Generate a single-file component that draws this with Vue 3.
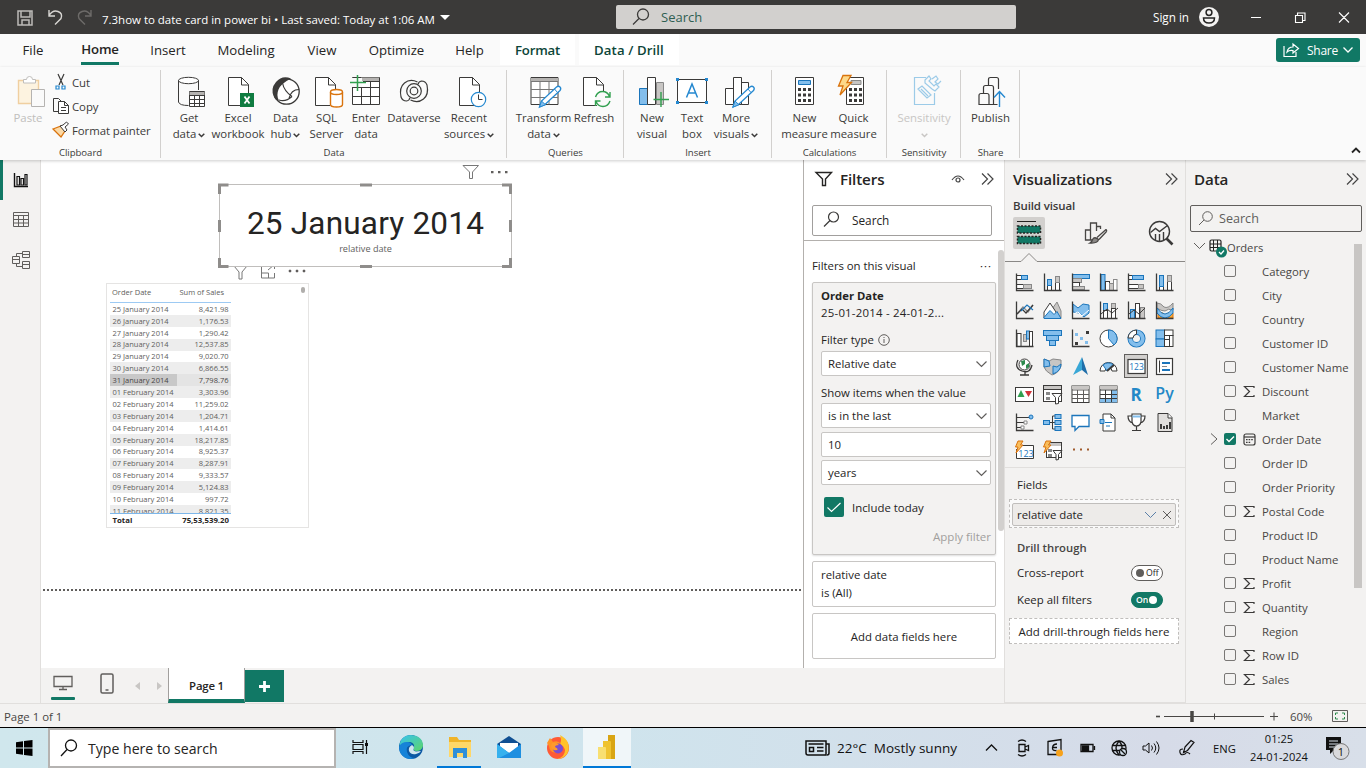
<script setup>
const K = '#3b3a39'
const B = '#1b75bb'
const L = '#83beec'
const doc = (x) => `<path d="M${x} 2.5h13l7 7V30.5H${x}z" fill="#fff" stroke="#3b3a39"/><path d="M${x + 13} 2.5v7.5h7" fill="none" stroke="#3b3a39"/>`
const pencil = (x) => `<path d="M${x} 32l2-6 15-14q2-1.500 3.500 0t0 3.500l-15 14z" fill="#fff" stroke="#2488d0" stroke-width="1.300"/><path d="M${x} 32l2-6 4 3.800z" fill="#83beec" stroke="#2488d0"/><path d="M${x + 15} 14l3 3.500" stroke="#2488d0"/>`
const bolt = '<path d="M6 0.500h8l-4 7h4.500L3 20l3-9H1.500z" fill="#fcd98a" stroke="#d9730d" stroke-width="1.300"/>'
const dots = (x) => [14, 19.5, 25].map(y => [0, 5, 10].map(d => `<rect x="${x + d}" y="${y - 1}" width="3" height="3" fill="#3b3a39"/>`).join('')).join('')

const ribbon = {
  get: `<path d="M6.500 5v22q1 3.500 10 3.500M26.500 5v10" stroke="${K}" fill="none"/><ellipse cx="16.500" cy="5.500" rx="10" ry="3.200" fill="#fff" stroke="${K}"/><path d="M17.500 16.500h15v15h-15z" fill="#fff" stroke="${K}"/><path d="M17.500 17h15v3h-15z" fill="#b5b3b1"/><path d="M17.500 20.500h15M17.500 24.500h15M17.500 28.500h15M22.500 20v11.500M27.500 20v11.500" stroke="${K}" fill="none"/>`,
  excel: doc(7.5) + '<rect x="19" y="18" width="14" height="14" fill="#107c41"/><path d="M23.500 21.500l5 7M28.500 21.500l-5 7" stroke="#fff" stroke-width="1.800"/>',
  hub: `<circle cx="17.500" cy="16.500" r="12.700" fill="#fff" stroke="${K}" stroke-width="1.300"/><path d="M22 3.500Q13 0 7 7T5 22q1.500 3.500 5 3.500-3-5-.5-11T22 3.500z" fill="${K}"/><path d="M13.500 8q1.500 8 9.500 13.500M20 23.500q2-9 10-9M10 25q7 2 13-3.500" fill="none" stroke="${K}" stroke-width="1.200"/>`,
  sql: doc(5.5) + '<path d="M20 15h12.500v17H20z" fill="#fafafa"/><path d="M20.500 17v12.500q0 2.500 6 2.500t6-2.500V17" fill="#fff" stroke="#d9730d" stroke-width="1.400"/><ellipse cx="26.500" cy="17" rx="6" ry="2.500" fill="#fff" stroke="#d9730d" stroke-width="1.400"/>',
  enter: `<path d="M3.500 2.500h27v27h-27z" fill="#fff" stroke="${K}"/><path d="M12 2.500h18v3.500H12z" fill="#b5b3b1"/><path d="M3.500 12.500h27M3.500 21.500h27M12.500 6v23.500M21.500 6v23.500M14 6.500h16.500" stroke="${K}" fill="none"/><path d="M0 3h13v9H0z" fill="#fafafa"/><path d="M1 7.500h16M8.500 0v16" stroke="#31a04f" stroke-width="1.500"/>`,
  dataverse: `<g fill="none" stroke="${K}" stroke-width="1.200"><circle cx="17" cy="16" r="3.800"/><circle cx="17" cy="16" r="7.300"/><path d="M20.500 7Q13 3.500 7.500 8T4 22q1.500 4 5.500 4 3-.5 3.500-3.500"/><path d="M13.500 25Q21 28.500 26.500 24T30 10q-1.500-4-5.500-4-3 .5-3.500 3.500"/></g>`,
  recent: doc(7.5) + '<circle cx="26.500" cy="24.500" r="7.200" fill="#fff" stroke="#2488d0" stroke-width="1.200"/><path d="M26.500 19.500v5h4" fill="none" stroke="#3b3a39"/>',
  transform: `<path d="M4 2.500h27v27H4z" fill="#fff" stroke="${K}"/><path d="M4 3h27v3H4z" fill="#b5b3b1"/><path d="M4 6.500h27M4 14.500h27M4 22.500h27M13 6v23.500M22 6v23.500" stroke="#777"/>` + pencil(12.5),
  refresh: doc(6.5) + '<circle cx="26" cy="24.500" r="8.500" fill="#fafafa"/><path d="M18.500 22q2-5.500 7-5.500t7 5M33 17v5h-5M33 26q-2 5.500-7 5.500t-7-5M18.500 31v-5h5" fill="none" stroke="#31a04f" stroke-width="1.400"/>',
  visual: `<path d="M4.500 13.500h8v16h-8z" fill="${L}" stroke="${B}"/><path d="M21.500 7.500h7v22h-7z" fill="#c8c6c4" stroke="#888"/><path d="M12.500 2.500h8v27h-8z" fill="#fff" stroke="${K}"/><path d="M18.500 24.500h15.500M26 17v15" stroke="#31a04f" stroke-width="1.400"/>`,
  text: `<path d="M2.500 4.500h29v23h-29z" fill="#fff" stroke="${K}"/><path d="M1 3h3v3H1zM30 3h3v3h-3zM1 26h3v3H1zM30 26h3v3h-3z" fill="#2488d0"/><path d="M11.500 22.500l5.500-13.500 5.500 13.500M13.500 18h7" fill="none" stroke="#2488d0" stroke-width="1.500"/>`,
  more: `<path d="M6.500 13.500h8v16h-8zM22.500 7.500h7v22h-7zM14.500 2.500h8v27h-8z" fill="#fff" stroke="${K}"/>` + pencil(14),
  measure: `<path d="M7.500 2.500h18v27h-18z" fill="#fff" stroke="${K}"/><path d="M10.500 5.500h12v4h-12z" fill="${L}" stroke="${B}"/>` + dots(10),
  quick: `<path d="M9.500 2.500h17v27h-17z" fill="#fff" stroke="${K}"/><path d="M14 5.500h10v4H14z" fill="#c8c6c4" stroke="#888"/>` + dots(12) + bolt,
  sensitivity: `<g fill="none" stroke="#9ccbe8" stroke-width="1.200"><path d="M19 2.500H7.500v27h20V18"/><path d="M11 14l4-3 9 9-4 3zM14 14l7 7M18 5l4-4 2 3-2 2 5 5 2-2 3 3-4 4-3-2-7-6zM25 4l4-3 2 3-3 3 3 2 3-3"/></g>`,
  publish: `<path d="M5 29.500V20.500q0-2 2-2h6q2 0 2 2v9zM9.500 18V12.500q0-2 2-2h6q2 0 2 2V29.500H15M14.500 10V4.500q0-2 2-2h6q2 0 2 2V14M19.500 29.500h4" fill="none" stroke="${K}" stroke-width="1.200"/><path d="M25.500 32V17M20 22.500l5.500-6 5.500 6" fill="none" stroke="#2488d0" stroke-width="1.400"/>`
}

const groups = [
  { label: 'Data', cls: 'g-data', tools: [
    { i: 'get', w: 'w48', a: 'Get', b: 'data', d: 1 }, { i: 'excel', w: 'w50', a: 'Excel', b: 'workbook' },
    { i: 'hub', w: 'w45', a: 'Data', b: 'hub', d: 1 }, { i: 'sql', w: 'w37', a: 'SQL', b: 'Server' },
    { i: 'enter', w: 'w42', a: 'Enter', b: 'data' }, { i: 'dataverse', w: 'w54', a: 'Dataverse', b: '' },
    { i: 'recent', w: 'w56', a: 'Recent', b: 'sources', d: 1 }] },
  { label: 'Queries', cls: 'g-queries', tools: [
    { i: 'transform', w: 'w57', a: 'Transform', b: 'data', d: 1 }, { i: 'refresh', w: 'w44', a: 'Refresh', b: '' }] },
  { label: 'Insert', cls: 'g-insert', tools: [
    { i: 'visual', w: 'w40', a: 'New', b: 'visual' }, { i: 'text', w: 'w40', a: 'Text', b: 'box' },
    { i: 'more', w: 'w48', a: 'More', b: 'visuals', d: 1 }] },
  { label: 'Calculations', cls: 'g-calc', tools: [
    { i: 'measure', w: 'w48', a: 'New', b: 'measure' }, { i: 'quick', w: 'w50', a: 'Quick', b: 'measure' }] },
  { label: 'Sensitivity', cls: 'g-sens', tools: [{ i: 'sensitivity', w: 'w57', a: 'Sensitivity', b: '', d: 1, off: 1 }] },
  { label: 'Share', cls: 'g-share', tools: [{ i: 'publish', w: 'w44', a: 'Publish', b: '' }] }
]

const tabs = [
  ['File', 't-file'], ['Home', 't-home'], ['Insert', 't-insert'], ['Modeling', 't-model'], ['View', 't-view'],
  ['Optimize', 't-opt'], ['Help', 't-help'], ['Format', 't-format'], ['Data / Drill', 't-drill']
]

const axis = `<path d="M1.500 0.500v17h17" fill="none" stroke="${K}" stroke-width="1.300"/>`
const r = (x, y, w, h, f = '#fff', s = K) => `<rect x="${x}" y="${y}" width="${w}" height="${h}" fill="${f}" stroke="${s}"/>`
const G = '#c8c6c4'
const vis = [
  r(1.5, 2.5, 5, 4) + r(6.5, 2.5, 6, 4, L, B) + r(1.5, 11.5, 7, 4) + r(8.5, 11.5, 8, 4, G, '#888') + axis,
  r(4.5, 11.5, 4, 6) + r(4.5, 6.5, 4, 6, L, B) + r(12.5, 9.5, 4, 8) + r(12.5, 3.5, 4, 6, G, '#888') + axis,
  r(1.5, 1.5, 17, 4, L, B) + r(1.5, 5.5, 9, 4, G, '#888') + r(1.5, 9.5, 7, 4) + r(1.5, 13.5, 12, 3, G, '#888') + axis,
  r(2, 1.5, 4, 16, L, B) + r(6.5, 8.5, 4, 9) + r(10.5, 10.5, 4, 7, G, '#888') + r(14.5, 6.5, 3.5, 11, '#fff', '#888') + axis,
  r(1.5, 2.5, 4, 4) + r(5.5, 2.5, 11, 4, L, B) + r(1.5, 11.5, 10, 4) + r(11.5, 11.5, 5, 4, G, '#888') + axis,
  r(4.5, 13.5, 4, 4) + r(4.5, 2.5, 4, 11, L, B) + r(12.5, 8.5, 4, 9) + r(12.5, 2.5, 4, 6, G, '#888') + axis,
  `<path d="M2 13l6-7 5 5 5-7" fill="none" stroke="#888" stroke-width="1.300"/><path d="M2 13l5-5 4 4 7-8" fill="none" stroke="${K}" stroke-width="1.200"/><path d="M6 10l6-6 6 5" fill="none" stroke="${B}" stroke-width="1.200"/>` + axis,
  `<path d="M9 8l5-7 4 9v7H9z" fill="${G}" stroke="#888"/><path d="M1 11l6-9 6 9v6H1z" fill="#fff" stroke="${K}"/><path d="M1 17.500v-1l6-7 4 4 3-3 4 7z" fill="${L}" stroke="${B}"/>`,
  `<path d="M2 3l5 4 5-4 6 1v8l-5 4-5-4-6-1z" fill="${L}" stroke="${B}"/><path d="M2 13l5-2 4 4 7-6" fill="none" stroke="#fff"/>` + axis,
  r(4.5, 2.5, 4, 7, L, B) + r(4.5, 9.5, 4, 8) + r(12.5, 2.5, 4, 5, G, '#888') + r(12.5, 7.5, 4, 10) + `<path d="M2 13l6-5 5 4 6-5" fill="none" stroke="${K}"/>` + axis,
  r(3.5, 8.5, 4, 9, L, B) + r(8.5, 2.5, 4, 15) + r(13.5, 6.5, 4, 11, G, '#888') + `<path d="M2 13l5-4 5 4 6-6" fill="none" stroke="${K}"/>` + axis,
  `<path d="M2 2q4 0 7 4 4 2 9-4v7q-5-2-8 1-4 0-8-3z" fill="${G}" stroke="#888"/><path d="M3 12h5v5H3zM13 12h5v5h-5z" fill="#f5a83b" stroke="#d9730d"/><path d="M2 7q4 6 8 6t8-6v5q-4 5-8 5t-8-5z" fill="${L}" stroke="${B}"/>` + axis,
  r(2, 4.5, 4, 13) + r(8.5, 5.5, 3, 7, G, '#888') + r(11.5, 2, 3, 8, L, B) + r(14.5, 2.5, 3, 15) + axis,
  r(.5, 1.5, 18, 5, L, B) + r(3.5, 6.5, 12, 5, L, B) + r(6.5, 11.5, 6, 5, L, B),
  `<path d="M4 4h3v3H4zM9 8h3v3H9zM14 12h3v3h-3z" fill="${L}"/><path d="M15 2h3v3h-3zM4 13h3v3H4z" fill="${K}"/>` + axis,
  `<circle cx="9.500" cy="9.500" r="8.500" fill="#fff" stroke="${K}"/><path d="M9.500 1a8.500 8.500 0 0 1 5.500 15l-5.500-6.500z" fill="${L}" stroke="${B}"/>`,
  `<circle cx="9.500" cy="9.500" r="6.300" fill="none" stroke="${B}" stroke-width="5.500"/><circle cx="9.500" cy="9.500" r="6.300" fill="none" stroke="${L}" stroke-width="3.800"/><path d="M9.500 1a8.500 8.500 0 0 0-8.500 8h5q0-3 3.500-4z" fill="#fff" stroke="${K}"/>`,
  r(1, 1, 8.5, 9, L, B) + r(1, 10, 8.5, 7.5, L, B) + r(9.5, 1, 8.5, 5.5) + r(9.5, 6.5, 5, 4) + r(14.5, 6.5, 3.5, 11) + r(9.5, 10.5, 5, 7),
  `<circle cx="9.500" cy="7.500" r="5.500" fill="#fff" stroke="${K}"/><path d="M6 4l4-1v4L7 9zM11 8l3-2v4l-3 2z" fill="#2e8b4e"/><path d="M3 3q-4 8 4 11t10-6M10 14v4M5 18h9" fill="none" stroke="${K}" stroke-width="1.300"/>`,
  `<path d="M1 2l5 2 4-2 8 1v6q-2 7-9 9-7-4-8-8z" fill="${G}" stroke="#888"/><path d="M1 2l5 2 1 5-6 1zM10 9l4 1 4-3q0 7-8 10z" fill="${L}" stroke="${B}"/>`,
  `<path d="M11 0l6 18-6-5z" fill="#1f6ea9"/><path d="M11 0L2 18l9-5z" fill="#38a7d6"/>`,
  `<path d="M1 14a8.500 8.500 0 0 1 17 0h-5a3.500 3.500 0 0 0-7 0z" fill="#fff" stroke="${K}"/><path d="M4 8a8.500 8.500 0 0 1 10-.5L8 14z" fill="${L}" stroke="${B}"/><path d="M8 14l7-6" stroke="${K}" stroke-width="2"/>`,
  `<rect x="1" y="2.500" width="17" height="14" fill="#fff" stroke="${K}" stroke-width="1.200"/><text x="9.500" y="12.800" font-size="8.500" text-anchor="middle" fill="${B}">123</text>`,
  `<rect x="1.500" y="1.500" width="16" height="16" fill="#fff" stroke="${K}" stroke-width="1.200"/><path d="M4.500 3.500v12" stroke="${K}"/><path d="M7 6h8M7 13h8" stroke="${B}" stroke-width="2"/><path d="M7 9.500h5" stroke="#888"/>`,
  r(.5, 2.5, 18, 14) + `<path d="M2.500 12l3.500-7 3.500 7z" fill="#31a04f"/><path d="M10 6h7l-3.500 6z" fill="#d13438"/>`,
  r(.5, .5, 18, 16) + `<path d="M1 1h17v3H1z" fill="${G}"/><path d="M3 7h4v3H3zM3 12h4v3H3z" fill="#888"/><path d="M.5 4.500h18" stroke="${K}"/><path d="M9 8.500h10l-3.500 4v6l-3 .5v-6.500z" fill="#fff" stroke="${K}"/>`,
  r(1, 1, 17, 16.5) + `<path d="M1 1h17v3H1z" fill="${G}"/><path d="M1 5h17M1 9.500h17M1 13.500h17M6.500 5v12M12.500 5v12" stroke="#605e5c"/>`,
  r(1, 1, 17, 16.5) + `<path d="M1 1h17v3H1z" fill="${G}"/><path d="M12.500 5H18v12.500H1v-4h11.500z" fill="${L}"/><path d="M1 5h17M1 9.500h17M1 13.500h17M6.500 5v12M12.500 5v12" stroke="${K}"/>`,
  '<text x="9" y="15.500" font-size="17" font-weight="700" text-anchor="middle" fill="#2488c7">R</text>',
  '<text x="9.500" y="14" font-size="16" font-weight="600" text-anchor="middle" fill="#2488c7">Py</text>',
  `<path d="M2 4.500h13M2 9.500h8M2 14.500h5" stroke="${K}"/><circle cx="16" cy="4" r="2" fill="${L}" stroke="${B}"/><path d="M9 8h3v3H9zM6 13h3v3H6z" fill="#fff" stroke="#888"/>` + axis,
  `<path d="M6 9.500h6M9.500 3v13M9.500 3H12M9.500 16H12" fill="none" stroke="${K}"/>` + r(.5, 7.5, 6, 4, L, B) + r(12, 1.5, 6, 4, L, B) + r(12, 7.5, 6, 4, L, B) + r(12, 13.5, 6, 4, L, B),
  `<path d="M1 2.500h17v11H8l-4 4v-4H1z" fill="#fff" stroke="${B}" stroke-width="1.300"/>`,
  `<path d="M4 6V1h8l4 4v13H4v-7" fill="#fff" stroke="${K}"/><path d="M12 1v4h4" fill="none" stroke="${K}"/><path d="M6 9.500h7M7 13h4" stroke="${B}"/><path d="M1 6.500h4v4H1z" fill="${L}" stroke="${B}"/>`,
  `<path d="M5 1h9v8q-1 4-4.500 4T5 9zM5 3H1q0 6 5 7M14 3h4q0 6-5 7M9.500 13v4M5 17.500h9" fill="#fff" stroke="${K}" stroke-width="1.200"/><path d="M5.500 2.500h8v2h-8z" fill="${L}"/>`,
  `<path d="M3 .5h10l4 4v14H3z" fill="#e1dfdd" stroke="${K}"/><path d="M13 .5V5h4" fill="#fff" stroke="${K}"/><path d="M6 11v5M9 13v3M12 12v4M15 9v7" stroke="${K}" stroke-width="2"/>`,
  `<path d="M4 4.500h14.500v13H1.500V8" fill="#fff" stroke="${K}"/><text x="11" y="15.500" font-size="9" text-anchor="middle" fill="${B}">123</text><path d="M3 0h5L5.500 4H8L1 12l2-6H.5z" fill="#f9bd5b" stroke="#d9730d"/>`,
  r(3.5, 1.5, 15, 15) + `<path d="M4 2h14v3H4z" fill="${G}"/><path d="M5 8h4v3H5zM5 13h4v3H5z" fill="#888"/><path d="M10 9.500h9l-3.500 4v5l-2.500.5v-5.500z" fill="#fff" stroke="${K}"/><path d="M3 0h5L5.500 4H8L1 12l2-6H.5z" fill="#f9bd5b" stroke="#d9730d"/>`,
  '<path d="M2 7.500h2v2H2zM9 7.500h2v2H9zM16 7.500h2v2h-2z" fill="#a05a2c"/>'
]

const rows = [
  ['25 January 2014', '8,421.98'], ['26 January 2014', '1,176.53'], ['27 January 2014', '1,290.42'],
  ['28 January 2014', '12,537.85'], ['29 January 2014', '9,020.70'], ['30 January 2014', '6,866.55'],
  ['31 January 2014', '7,798.76'], ['01 February 2014', '3,303.96'], ['02 February 2014', '11,259.02'],
  ['03 February 2014', '1,204.71'], ['04 February 2014', '1,414.61'], ['05 February 2014', '18,217.85'],
  ['06 February 2014', '8,925.37'], ['07 February 2014', '8,287.91'], ['08 February 2014', '9,333.57'],
  ['09 February 2014', '5,124.83'], ['10 February 2014', '997.72'], ['11 February 2014', '8,821.35']
]

const fields = [
  ['Category'], ['City'], ['Country'], ['Customer ID'], ['Customer Name'], ['Discount', 's'], ['Market'],
  ['Order Date', 'd'], ['Order ID'], ['Order Priority'], ['Postal Code', 's'], ['Product ID'], ['Product Name'],
  ['Profit', 's'], ['Quantity', 's'], ['Region'], ['Row ID', 's'], ['Sales', 's']
]
</script>

<template>
  <div class="app">
    <header class="titlebar">
      <svg class="qa" width="100" height="34" fill="none">
        <path d="M18 11h14v14H18zM21 11v6h9v-6M22 25v-5h7v5" stroke="#bdbbb8" stroke-width="1.500" />
        <path d="M49 10v6h6M49 15.500q4-6 9-4t3 7l-6 6" stroke="#d8d6d3" stroke-width="1.400" />
        <path d="M91 10v6h-6M91 15.500q-4-6-9-4t-3 7l6 6" stroke="#6d6b69" stroke-width="1.400" />
      </svg>
      <span class="doc-title">7.3how to date card in power bi • Last saved: Today at 1:06 AM</span>
      <i class="caret"></i>
      <div class="top-search">
        <svg width="18" height="18" fill="none" stroke="#3b3a39" stroke-width="1.300"><circle cx="11" cy="6.500" r="5.500" /><path d="M7 10.500L1 16.500" /></svg>
        <span>Search</span>
      </div>
      <span class="signin">Sign in</span>
      <svg class="avatar" width="20" height="20"><circle cx="10" cy="10" r="10" fill="#f3f2f1" /><g fill="none" stroke="#252423" stroke-width="1.500"><circle cx="10" cy="5.500" r="2.900" /><path d="M4.500 11h11q0 5-5.500 5t-5.500-5z" /></g></svg>
      <svg class="winbtns" width="110" height="34" fill="none" stroke="#fff">
        <path d="M12 17.500h10M56.500 15.500h7v7h-7zM58.500 15v-2h7.500v7.500h-2M100 12.500l10 10M110 12.500l-10 10" stroke-width="1.100" />
      </svg>
    </header>

    <nav class="tabs">
      <span v-for="t in tabs" :key="t[0]" class="tab" :class="t[1]"><b>{{ t[0] }}</b></span>
      <div class="share-btn">
        <svg width="17" height="14" fill="none" stroke="#fff" stroke-width="1.200"><path d="M1 3v10.500h12V9M4 9q1-5 6-5V1l5.500 4.500L10 10V7.500Q6 7 4 9z" /></svg>
        <span>Share</span>
        <svg width="10" height="6" fill="none" stroke="#fff" stroke-width="1.300"><path d="M.5.500L5 5 9.500.500" /></svg>
      </div>
    </nav>

    <section class="ribbon">
      <div class="group clipboard">
        <div class="tools">
          <div class="paste">
            <svg width="30" height="32" fill="none"><path d="M2.500 5.500h20v23h-20z" fill="#fdf3e0" stroke="#f0cfa0" stroke-width="1.400" /><path d="M7.500 8V4.500h3q0-3 3-3t3 3h3V8z" fill="#fff" stroke="#c0bebc" /><path d="M15.500 14.500h13v17h-13z" fill="#fafafa" stroke="#b5b3b1" /></svg>
            <span>Paste</span>
          </div>
          <div class="clip-list">
            <div><svg width="18" height="18" fill="none" stroke="#3b3a39" stroke-width="1.200"><path d="M6 1l5 11M12 1L7 12" /><path d="M4 13h3v3H4zM10 13h3v3h-3z" stroke="#2488d0" /></svg>Cut</div>
            <div><svg width="18" height="18" fill="none" stroke="#3b3a39"><path d="M6 14.500H1.500v-13h5L9 4" /><path d="M6.500 4.500h6l4 4v8h-10zM12.500 4.500v4h4M9 10.500h5M9 13.500h5" fill="#fff" /></svg>Copy</div>
            <div><svg width="18" height="18" fill="none"><path d="M1 8l8-3 4 5-4 6z" fill="#fbd9a6" stroke="#d9730d" stroke-width="1.300" /><path d="M8 5l5 6 2-2-2-3 3.500-3-2-2-3.500 3z" fill="#fff" stroke="#3b3a39" /></svg>Format painter</div>
          </div>
        </div>
        <span class="glabel">Clipboard</span>
      </div>
      <div v-for="g in groups" :key="g.label" class="group" :class="g.cls">
        <div class="tools">
          <div v-for="t in g.tools" :key="t.i" class="tool" :class="[t.w, { off: t.off }]">
            <svg width="34" height="34" fill="none" v-html="ribbon[t.i]"></svg>
            <span>{{ t.a }}</span>
            <span>{{ t.b }}<svg v-if="t.d" class="chev" width="7" height="5" fill="none" stroke="currentColor" stroke-width="1.500"><path d="M.7.700L3.500 3.500 6.300.700" /></svg></span>
          </div>
        </div>
        <span class="glabel">{{ g.label }}</span>
      </div>
      <svg class="collapse" width="10" height="7" fill="none" stroke="#252423" stroke-width="1.800"><path d="M1 5.500l4-4 4 4" /></svg>
    </section>

    <main class="main">
      <aside class="rail">
        <i class="rail-active"></i>
        <svg width="40" height="120" fill="none">
          <path d="M14.500 13v13.500H28" stroke="#111" stroke-width="1.400" /><path d="M17 16.500h2.500V25H17zM21 18.500h2.500V25H21zM25 14.500h2V25h-2z" stroke="#111" stroke-width="1.200" />
          <path d="M13.500 52.500h15v14h-15zM13.500 55.500h15M13.500 59.500h15M13.500 63h15M18.500 55v11M23.500 55v11" stroke="#605e5c" />
          <path d="M12.500 96.500h7v7h-7zM12.500 99.500h7M22.500 91.500h7v6h-7zM22.500 94.500h7M22.500 101.500h7v7h-7zM22.500 104.500h7M16.500 96v-2.500h6M16.500 104v2.500h6" stroke="#605e5c" />
        </svg>
      </aside>

      <div class="center">
        <div class="upper">
          <div class="canvas">
            <div class="page-edge"></div>
            <div class="visual-tools tools-table">
              <svg width="76" height="16" fill="none" stroke="#777"><path d="M1 1h13L9 7v7H6V7zM28.500 1v12h13V8M28.500 8h7v5M35 5l6-5M38 .500h3.500V4" /><path d="M56 5h2v2h-2zM63 5h2v2h-2zM70 5h2v2h-2z" fill="#605e5c" stroke="#605e5c" stroke-width=".5" /></svg>
            </div>
            <div class="table-visual">
              <div class="thead"><span>Order Date</span><span>Sum of Sales</span></div>
              <div class="tbody">
                <div v-for="(row, i) in rows" :key="row[0]" class="trow" :class="{ alt: i % 2, sel: i === 6 }"><span>{{ row[0] }}</span><span>{{ row[1] }}</span></div>
              </div>
              <div class="tfoot"><span>Total</span><span>75,53,539.20</span></div>
              <i class="tscroll"></i>
            </div>
            <div class="visual-tools tools-card">
              <svg width="52" height="16" fill="none" stroke="#777"><path d="M1 1.500h15.500L10.500 8v6.500h-3V8z" /><path d="M29 7h2.500v2.200H29zM36 7h2.500v2.200H36zM43 7h2.500v2.200H43z" fill="#605e5c" stroke="none" /></svg>
            </div>
            <div class="card-visual">
              <div class="card-value">25 January 2014</div>
              <div class="card-label">relative date</div>
              <svg class="handles" width="296" height="86" fill="none" stroke="#8f8d8b" stroke-width="3"><path d="M1.500 11V2h9M284 2h8.500V11M1.500 75v8.500h9M284 83.500h8.500V75M142 2h12M142 83.500h12M1.500 37v12M292.500 37v12" /></svg>
            </div>
          </div>

          <aside class="filters">
            <div class="pane-head">
              <svg width="18" height="16" fill="none" stroke="#252423" stroke-width="1.400"><path d="M1 1.500h15.500L10.500 8v6.500h-3V8z" /></svg>
              <h2>Filters</h2>
              <svg class="eye" width="14" height="10" fill="none" stroke="#444" stroke-width="1.200"><path d="M1 6q6-8 12 0" /><circle cx="7" cy="6" r="2" /></svg>
              <svg width="13" height="12" fill="none" stroke="#444" stroke-width="1.200"><path d="M1 .500L6.500 6 1 11.500M6.500.500L12 6l-5.500 5.500" /></svg>
            </div>
            <div class="f-search">
              <svg width="17" height="17" fill="none" stroke="#3b3a39" stroke-width="1.200"><circle cx="10.500" cy="6" r="5" /><path d="M7 9.500L1 15.500" /></svg>
              <span>Search</span>
            </div>
            <div class="f-body">
              <i class="f-scroll"></i>
              <div class="f-title"><span>Filters on this visual</span><span class="dots">···</span></div>
              <div class="f-card">
                <strong>Order Date</strong>
                <p>25-01-2014 - 24-01-2...</p>
                <label class="ft">Filter type <svg width="12" height="12" fill="none" stroke="#605e5c"><circle cx="6" cy="6" r="5.300" /><path d="M6 5v4M6 3v1" /></svg></label>
                <div class="sel s1">Relative date<svg width="11" height="6" fill="none" stroke="#605e5c" stroke-width="1.200"><path d="M.5.500l5 5 5-5" /></svg></div>
                <label class="si">Show items when the value</label>
                <div class="sel s2">is in the last<svg width="11" height="6" fill="none" stroke="#605e5c" stroke-width="1.200"><path d="M.5.500l5 5 5-5" /></svg></div>
                <div class="sel s3">10</div>
                <div class="sel s4">years<svg width="11" height="6" fill="none" stroke="#605e5c" stroke-width="1.200"><path d="M.5.500l5 5 5-5" /></svg></div>
                <div class="incl"><i><svg width="20" height="20" fill="none" stroke="#fff" stroke-width="1.200"><path d="M3.500 10.500l4 4 9-8.500" /></svg></i>Include today</div>
                <div class="apply">Apply filter</div>
              </div>
              <div class="f-box rel"><span>relative date</span><span>is (All)</span></div>
              <div class="f-box add">Add data fields here</div>
            </div>
          </aside>
        </div>

        <div class="pagebar">
          <div class="mode desk"><svg width="20" height="16" fill="none" stroke="#605e5c" stroke-width="1.300"><path d="M1 1.500h18v10H1zM10 12v3M6 14.500h8" /></svg><i></i></div>
          <div class="mode"><svg width="14" height="21" fill="none" stroke="#605e5c" stroke-width="1.500"><rect x="1" y="1" width="12" height="19" rx="1.500" /><path d="M5.500 17h3" /></svg></div>
          <i class="tri left"></i><i class="tri right"></i>
          <div class="page-tab">Page 1</div>
          <div class="add-page"><svg width="11" height="11" stroke="#fff" stroke-width="2.800"><path d="M5.500 0v11M0 5.500h11" /></svg></div>
        </div>
      </div>

      <aside class="viz">
        <div class="pane-head"><h2>Visualizations</h2><svg width="13" height="12" fill="none" stroke="#444" stroke-width="1.200"><path d="M1 .500L6.500 6 1 11.500M6.500.500L12 6l-5.500 5.500" /></svg></div>
        <h3>Build visual</h3>
        <div class="modes">
          <div class="mbtn on"><svg width="26" height="26" fill="none"><path d="M1 1.500h19" stroke="#252423" /><path d="M1.500 6h23v7h-23zM1.500 16.500h23v7h-23z" fill="#117865" stroke="#252423" stroke-width="1.500" stroke-dasharray="2 1.500" /></svg></div>
          <div class="mbtn"><svg width="26" height="26" fill="none" stroke="#484644" stroke-width="1.300"><path d="M10 20H3.500V10h5V3h6v8M14.500 6.500h4V9M8.500 9v11" /><path d="M24 9.500l-9 8M24.500 11.500l-7.500 8M24 9.500q1 1 .5 2" /><path d="M8 23q2-1 2.500-3.500 2-3.500 6 0-.5 4-8.500 3.500z" fill="#8a8886" /></svg></div>
          <div class="mbtn"><svg width="28" height="28" fill="none" stroke="#3b3a39" stroke-width="1.400"><circle cx="12.500" cy="12.500" r="10" /><path d="M3.500 13.500l5-4 4 3 8-6M8.500 21v-6M12.500 22v-7M16.500 21v-8" /><path d="M19.500 19.500l6 6" stroke-width="2.600" /></svg></div>
        </div>
        <svg class="notch" width="181" height="10" fill="none" stroke="#8a8886"><path d="M0 8.500h16l8-8 8 8h149" /></svg>
        <div class="vgrid">
          <div v-for="(v, i) in vis" :key="i" class="vcell" :class="{ on: i === 22 }"><svg width="19" height="19" fill="none" v-html="v"></svg></div>
        </div>
        <div class="wells">
          <span class="wl-title">Fields</span>
          <div class="well"><div class="chip"><span>relative date</span><svg width="28" height="10" fill="none" stroke="#605e5c"><path d="M1 2l5.500 5.500L12 2" stroke="#5b7fa8" /><path d="M19 1l8 8M27 1l-8 8" /></svg></div></div>
          <span class="wl-title drill">Drill through</span>
          <div class="toggle-row r1"><span>Cross-report</span><i class="toggle"><em></em>Off</i></div>
          <div class="toggle-row r2"><span>Keep all filters</span><i class="toggle on">On<em></em></i></div>
          <div class="drill-well">Add drill-through fields here</div>
        </div>
      </aside>

      <aside class="data">
        <div class="pane-head"><h2>Data</h2><svg width="13" height="12" fill="none" stroke="#444" stroke-width="1.200"><path d="M1 .500L6.500 6 1 11.500M6.500.500L12 6l-5.500 5.500" /></svg></div>
        <div class="d-search"><svg width="16" height="16" fill="none" stroke="#605e5c"><circle cx="9.500" cy="5.500" r="4.800" /><path d="M6 9L1 14" /></svg><span>Search</span></div>
        <div class="tree">
          <i class="d-scroll"></i>
          <div class="root">
            <svg width="40" height="22" fill="none"><path d="M1 7l5.500 5.500L12 7" stroke="#605e5c" /><rect x="17" y="4" width="11" height="11" rx="1.500" stroke="#252423" stroke-width="1.200" /><path d="M17 8h11M17 11.500h11M20.500 4v11M24.500 4v11" stroke="#252423" /><circle cx="28.500" cy="16" r="5.500" fill="#117865" /><path d="M26 16l2 2 3-3.500" stroke="#fff" stroke-width="1.300" /></svg>
            <span>Orders</span>
          </div>
          <div v-for="f in fields" :key="f[0]" class="field">
            <svg class="exp" width="8" height="14" fill="none" stroke="#605e5c"><path v-if="f[1] === 'd'" d="M1 1.500L7 7l-6 5.500" /></svg>
            <i class="cb" :class="{ on: f[1] === 'd' }"><svg v-if="f[1] === 'd'" width="12" height="12" fill="none" stroke="#fff" stroke-width="1.400"><path d="M2.500 6l2.500 2.500 5-5" /></svg></i>
            <svg class="ftype" width="13" height="13" fill="none" stroke="#3b3a39" stroke-width="1.200">
              <path v-if="f[1] === 's'" d="M11 3V1.500H1.500L6.500 6.500 1.500 11.500H11V10" />
              <g v-if="f[1] === 'd'"><rect x="1" y="1" width="11" height="11" rx="2" /><path d="M1 4h11" /><path d="M3 6.700h7M3 9.300h5" stroke-dasharray="1.600 1" /></g>
            </svg>
            <span>{{ f[0] }}</span>
          </div>
        </div>
      </aside>
    </main>

    <footer class="status">
      <span>Page 1 of 1</span>
      <svg class="zoom" width="123" height="14" fill="none" stroke="#484644"><path d="M0 7.500h4" stroke-width="1.600" /><path d="M8 7.500h100M58.500 4.500v6M114 7.500h8M118 3.500v8" /><path d="M36 2v11" stroke-width="3.500" /></svg>
      <span class="pct">60%</span>
      <svg class="fit" width="17" height="13" fill="none" stroke="#605e5c"><path d="M.5.500h15v11H.5z" /><path d="M3.500 5V3H6M10 3h2.500v2M3.500 7v2H6M10 9h2.500V7" stroke="#2e8b4e" /></svg>
    </footer>

    <footer class="taskbar">
      <div class="start"><svg width="17" height="16" fill="#000"><path d="M0 2.300l7-1V7.500H0zM8 1.100L16.500 0v7.500H8zM0 8.500h7v6.200l-7-1zM8 8.500h8.500V16L8 14.900z" /></svg></div>
      <div class="tb-search"><svg width="18" height="18" fill="none" stroke="#111" stroke-width="1.300"><circle cx="11" cy="6.500" r="5.500" /><path d="M7 10.500L1 17" /></svg><span>Type here to search</span></div>
      <div class="tbi taskview"><svg width="18" height="16" fill="none" stroke="#111" stroke-width="1.200"><path d="M1 1v2.500h10V1M1 5.500h10v5H1zM1 15v-2.500h10V15M14.500 1v14" /><path d="M13 4h3v3h-3z" fill="#111" stroke="none" /></svg></div>
      <div class="tbi"><svg width="26" height="26"><defs><linearGradient id="e1" x1="0" y1="0" x2="1" y2="1"><stop offset="0" stop-color="#35c1f1" /><stop offset="1" stop-color="#5fd668" /></linearGradient></defs><circle cx="13" cy="13" r="12" fill="#0c59a4" /><path d="M1.500 10Q4 1 13 1q12 1 12 11-1 5-7 5-4-1-2-3 1-5-4-6-6 0-10 5z" fill="url(#e1)" /><path d="M1 13q2-5 8-5 4 0 5 3-7 1-5 7 2 6 8 6Q8 27 3 20q-2-3-2-7z" fill="#1683d8" /><path d="M14 11q-4 2-3 6 2 4 7 3 4-1 5-3l-5 .5q-4-1-2-3.500 0-2-2-3z" fill="#cfe6ee" /></svg></div>
      <div class="tbi open"><svg width="24" height="22"><path d="M1 1h8l2 3h12v17H1z" fill="#f0b429" /><path d="M1 6h22v15H1z" fill="#ffd768" /><path d="M5 22V12h14v10h-4v-5H9v5z" fill="#2f8fd8" /></svg></div>
      <div class="tbi"><svg width="26" height="24"><path d="M1 9L13 1l12 8v3H1z" fill="#0f4f93" /><path d="M4 8h18v9H4z" fill="#fff" /><path d="M1 9l12 9 12-9v14H1z" fill="#1e8fe0" /><path d="M1 9l12 9L3 23H1z" fill="#36b1ee" /></svg></div>
      <div class="tbi"><svg width="26" height="26"><circle cx="13" cy="14" r="11" fill="#ff5a36" /><path d="M15 1q6 3 8 8 2 6-1 11-4 5-10 5 8-2 8-9-1-4-5-6 2-4 0-9z" fill="#ffc229" /><path d="M2 9l3-5 3 4q5-2 8 2-6 0-6 3 6 1 2 5-7 2-8-6z" fill="#ff9324" /><circle cx="13" cy="14.500" r="5" fill="#7a4fd0" /><path d="M7 9q5-1 7 2-4 0-4 2 4 2 2 3-5 1-6-4z" fill="#ff9a2b" /></svg></div>
      <div class="tbi open active"><svg width="22" height="26"><path d="M12 1h7v24h-7z" fill="#d9a514" /><path d="M7 7h7q1 0 1 1v17H7z" fill="#efc331" /><path d="M2 13h7q1 0 1 1v11H2z" fill="#f8df72" /></svg></div>
      <div class="tray">
        <svg width="25" height="18" fill="none" stroke="#111" stroke-width="1.500"><path d="M1 2h20v14H3q-2 0-2-2zM21 5h3v9q0 2-2 2M3.500 5h15M12 8.500h6.500M12 12h6.500" /><path d="M4.500 8.500h4v4h-4z" /></svg>
        <span class="wx">22°C&nbsp; Mostly sunny</span>
        <svg class="icons" width="210" height="24" fill="none" stroke="#111" stroke-width="1.300">
          <path d="M1 14.500L6.500 9 12 14.500" />
          <path d="M34 8.500h6v7h-6zM40 11l3.500-1.500v5L40 13M33 5.500q4-3 8 0M33 18.500q4 3 8 0" />
          <path d="M63 5.500l13-2v15H63zM72 8q-4 0-4.500 3.500t4 3M68 11.500h4" /><circle cx="74.500" cy="17" r="3.500" fill="#f7a21b" stroke="none" />
          <path d="M96 8.500h12v7H96zM109.500 10v4" /><path d="M97.500 10h6v4.500h-6z" fill="#111" />
          <circle cx="134" cy="12" r="7" /><path d="M127 9.500h14M127 14.500h10M134 5q-6 7 0 14M134 5q5 6 2 9" /><circle cx="138" cy="16" r="3.500" fill="#d3dfea" /><path d="M136 14l4 4" />
          <path d="M158 10h2.500l3.500-3v10l-3.500-3H158zM166.500 9.500q2 2.500 0 5M169 7.500q3.500 4.500 0 9M171.500 5.500q5 6.500 0 13" stroke-width="1" />
          <path d="M200 11l6-6.500 3 2-6.500 8-4 2zM198 13q-4 0-3 3.500t5 1.500q2-3 5 0" stroke-width="1.200" />
        </svg>
        <span class="lang">ENG</span>
        <span class="clock">01:25<br>24-01-2024</span>
        <svg class="note" width="28" height="26"><path d="M1 2h15v13H9l-4 4v-4H1z" fill="#111" /><path d="M4 6h9M4 9h9M4 12h6" stroke="#d8dfe9" /><circle cx="16" cy="16.500" r="8" fill="#d9d9dc" stroke="#777" /><text x="16" y="20.500" font-size="11" text-anchor="middle" fill="#111">1</text></svg>
      </div>
    </footer>
  </div>
</template>

<style>
body { margin: 0; overflow: hidden; }
</style>

<style scoped>
* { box-sizing: border-box; }
.app { width: 1366px; height: 768px; display: flex; flex-direction: column; overflow: hidden; font-family: "Open Sans", "Noto Sans", sans-serif; font-size: 11.4px; color: #252423; background: #fff; white-space: nowrap; }
svg { display: block; flex: none; overflow: visible; }
i, em { font-style: normal; display: block; }
h2, h3, p { margin: 0; }

.titlebar { height: 34px; background: #3b3a39; display: flex; align-items: center; color: #fff; flex: none; }
.doc-title { margin: 5px 0 0 2px; width: 334px; font-size: 11.5px; letter-spacing: -.02px; }
.caret { margin: 1px 1px 0 4px; border: 5px solid transparent; border-top-color: #fff; border-bottom: 0; }
.top-search { margin-left: 165px; width: 400px; height: 24px; background: #d2d0ce; border-radius: 2px; display: flex; align-items: center; padding-left: 16px; color: #2f5f52; font-size: 13px; }
.top-search span { margin-left: 11px; }
.signin { margin-left: 137px; width: 46px; font-size: 11.7px; }
.winbtns { margin-left: 20px; }

.tabs { height: 33px; background: #fafafa; display: flex; flex: none; font-size: 13.2px; }
.tab { height: 31px; display: flex; justify-content: center; align-items: center; position: relative; }
.tab b { font-weight: 400; }
.t-file { width: 66px; } .t-help { width: 61px; }
.t-home, .t-insert { width: 68px; }
.t-home b { font-weight: 600; height: 31px; line-height: 31px; border-bottom: 3px solid #117865; letter-spacing: -.2px; }
.t-model { width: 88px; } .t-view { width: 64px; } .t-opt { width: 85px; }
.t-format { width: 75px; margin-right: 4px; } .t-drill { width: 100px; }
.t-format, .t-drill { background: #fff; color: #0c4538; }
.t-format b { font-weight: 600; letter-spacing: -.18px; }
.t-drill b { font-weight: 600; letter-spacing: .1px; }
.share-btn { margin: 4px 0 0 597px; width: 84px; height: 24px; border-radius: 3px; background: #117865; color: #fff; display: flex; align-items: center; gap: 5px; padding-left: 7px; font-size: 12px; }
.share-btn span { margin-left: 2px; letter-spacing: -.25px; width: 31px; }

.ribbon { height: 93px; background: #fafafa; display: flex; position: relative; z-index: 2; flex: none; box-shadow: 0 1px 3px #0003; color: #3b3a39; }
.group { display: flex; flex-direction: column; padding-top: 8px; position: relative; align-items: center; }
.group::after { content: ""; position: absolute; right: 0; top: 3px; width: 1px; height: 88px; background: #d2d0ce; }
.tools { display: flex; height: 72px; }
.glabel { font-size: 9.6px; line-height: 14px; letter-spacing: -.03px; }
.clipboard { width: 161px; }
.clipboard .tools { width: 161px; }
.paste { width: 52px; padding-left: 4px; display: flex; flex-direction: column; align-items: center; color: #c0bebc; line-height: 16px; }
.paste span { margin-top: 3px; }
.paste svg { margin-left: 5px; }
.clip-list div { display: flex; align-items: center; gap: 2px; height: 24px; letter-spacing: -.07px; }
.clip-list { margin-top: -5px; }
.g-data { width: 346px; } .g-queries { width: 117px; } .g-insert { width: 148px; } .g-calc { width: 115px; } .g-sens { width: 74px; } .g-share { width: 59px; }
.g-data .tools { margin-left: -6px; }
.g-insert .tools { margin-left: -4px; }
.tool { display: flex; flex-direction: column; align-items: center; line-height: 16px; }
.tool > span { display: flex; align-items: center; gap: 2px; height: 16px; }
.tool > svg { margin-bottom: 1px; }
.chev { margin-top: 2px; }
.off { color: #c8c6c4; }
.w37 { width: 37px; } .w40 { width: 40px; } .w42 { width: 42px; } .w44 { width: 44px; } .w45 { width: 45px; } .w48 { width: 48px; } .w50 { width: 50px; } .w54 { width: 54px; } .w56 { width: 56px; } .w57 { width: 57px; }
.collapse { position: absolute; right: 5px; bottom: 6px; }

.main { height: 543px; display: flex; flex: none; }
.rail { width: 41px; background: #f3f2f1; border-right: 1px solid #e1dfdd; position: relative; }
.rail-active { position: absolute; left: 0; top: 0; width: 3px; height: 40px; background: #117865; }
.center { width: 963px; display: flex; flex-direction: column; }
.upper { height: 508px; display: flex; }
.canvas { width: 762px; position: relative; background: #fff; overflow: hidden; }
.page-edge { position: absolute; left: 2px; right: 2px; top: 429px; height: 2px; background: repeating-linear-gradient(90deg, #605e5c 0 2px, transparent 2px 4px); }
.visual-tools { position: absolute; }
.tools-table { left: 192px; top: 105px; }
.tools-card { left: 421px; top: 4px; }
.card-visual { position: absolute; left: 178px; top: 24px; width: 293px; height: 83px; border: 1px solid #c0bebc; background: #fff; text-align: center; }
.card-value { font: 31.5px/38px Roboto, sans-serif; letter-spacing: .2px; margin-top: 20px; color: #252423; }
.card-label { font-size: 9.1px; line-height: 12px; color: #605e5c; }
.handles { position: absolute; left: -2px; top: -2px; }
.table-visual { position: absolute; left: 65px; top: 123px; width: 203px; height: 245px; border: 1px solid #e5e4e3; background: #fff; padding-left: 3px; font-size: 7.5px; color: #605e5c; }
.thead, .trow, .tfoot { width: 121px; display: flex; justify-content: space-between; align-items: center; }
.thead { height: 19px; border-bottom: 1px solid #9dcaf3; padding: 0 7px 3px 2px; }
.tbody { height: 210px; overflow: hidden; width: 121px; }
.trow { height: 11.9px; }
.trow span:first-child { width: 67px; padding-left: 2.5px; line-height: 12.3px; }
.trow span:last-child { flex: 1; text-align: right; padding-right: 2.5px; line-height: 12.3px; }
.alt { background: #ededed; }
.trow.sel { background: #e4e4e4; color: #484644; }
.trow.sel span:first-child { background: #c8c8c8; }
.tfoot { border-top: 1px solid #7db7ea; font-weight: 700; color: #252423; height: 13px; padding: 0 2px 0 2.5px; font-size: 7.8px; }
.tscroll { position: absolute; right: 3px; top: 3px; width: 4px; height: 6px; border-radius: 2px; background: #b0aeac; }

.filters { width: 201px; border-left: 1px solid #b3b0ad; background: #fff; }
.pane-head { display: flex; align-items: center; height: 39px; padding-bottom: 2px; }
.pane-head h2 { font-size: 15.2px; font-weight: 600; line-height: 20px; letter-spacing: -.12px; }
.filters .pane-head { padding: 0 10px 2px 11px; }
.filters h2 { margin-left: 7px; flex: 1; }
.eye { margin-right: 16px; }
.f-search { margin: 6px 0 4px 8px; width: 180px; height: 31px; border: 1px solid #a19f9d; border-radius: 2px; display: flex; align-items: center; padding: 0 0 2px 10px; gap: 12px; font-size: 11.8px; }
.f-body { border-top: 1px solid #b3b0ad; height: 428px; padding: 14px 0 0 8px; position: relative; }
.f-scroll { position: absolute; right: 0; top: 9px; width: 6px; height: 281px; border-radius: 3px; background: #d2d0ce; }
.f-title { display: flex; justify-content: space-between; width: 180px; height: 22px; line-height: 22px; letter-spacing: -.04px; }
.dots { letter-spacing: 1px; }
.f-title + .f-card { margin-top: 5px; }
.f-card { width: 184px; height: 273px; border: 1px solid #c8c6c4; border-radius: 2px; background: #f3f2f1; padding: 4px 4px 0 8px; box-shadow: 0 1px 2px #0002; }
.f-card strong { display: block; font-weight: 700; line-height: 17px; font-size: 11.3px; }
.f-card p { line-height: 18px; letter-spacing: .23px; }
.f-card label { display: flex; gap: 4px; align-items: center; }
.ft { height: 29px; padding-top: 6px; }
.f-card .sel { width: 170px; height: 25px; border: 1px solid #c8c6c4; border-radius: 2px; background: #fff; color: #252423; display: flex; align-items: center; justify-content: space-between; padding: 0 3px 0 6px; }
.si { height: 27px; padding-top: 5px; }
.f-card .s3 { margin: 4px 0 3px; }
.incl { display: flex; align-items: center; height: 20px; margin: 12px 0 0 3px; gap: 8px; }
.incl i { width: 20px; height: 20px; background: #117865; border-radius: 2px; }
.apply { text-align: right; color: #a19f9d; font-size: 11.5px; line-height: 16px; margin-top: 12px; }
.f-box { width: 184px; height: 46px; border: 1px solid #c8c6c4; border-radius: 2px; margin-top: 6px; }
.rel { display: flex; flex-direction: column; padding: 4px 8px; line-height: 18px; }
.add { display: flex; align-items: center; justify-content: center; }

.pagebar { height: 35px; background: #f3f2f1; display: flex; align-items: center; }
.mode { width: 44px; height: 32px; display: flex; flex-direction: column; align-items: center; justify-content: flex-start; padding-top: 3px; }
.desk { padding-top: 5px; width: 43px; margin-right: 1px; }
.desk i { width: 24px; height: 3px; background: #117865; margin-top: 6px; border-radius: 1px; }
.tri { border: 4px solid transparent; }
.left { border-right: 5px solid #c8c6c4; border-left: 0; margin-left: 6px; }
.right { border-left: 5px solid #c8c6c4; border-right: 0; margin-left: 17px; }
.page-tab { margin-left: 6px; width: 77px; height: 35px; background: #fff; border-left: 1px solid #a19f9d; border-right: 1px solid #a19f9d; border-bottom: 4px solid #117865; text-align: center; line-height: 35px; font-weight: 600; letter-spacing: -.2px; }
.add-page { width: 39px; height: 32px; background: #117865; display: flex; align-items: center; justify-content: center; margin-top: 1px; }

.viz { width: 181px; background: #f3f2f1; border-left: 1px solid #e1dfdd; border-bottom: 1px solid #e1dfdd; }
.viz .pane-head, .data .pane-head { justify-content: space-between; padding: 0 7px 2px 8px; }
.viz h3 { font-size: 11.5px; font-weight: 600; margin-left: 8px; line-height: 14px; color: #3b3a39; letter-spacing: -.13px; }
.modes { display: flex; gap: 34px; margin: 4px 0 0 8px; }
.mbtn { width: 32px; height: 32px; display: flex; align-items: center; justify-content: center; border-radius: 2px; }
.mbtn.on { background: #d2d0ce; }
.notch { margin-top: 4px; }
.vgrid { display: grid; grid-template-columns: repeat(6, 28px); grid-auto-rows: 28px; padding-left: 5px; margin-top: 5px; }
.vcell { display: flex; align-items: center; justify-content: center; }
.vcell.on { width: 24px; height: 24px; margin: 2px; background: #d2d0ce; border: 1px solid #605e5c; }
.wells { border-top: 1px solid #e1dfdd; margin-top: 3px; padding: 8px 6px 0 4px; }
.wl-title { display: block; margin-left: 8px; line-height: 18px; }
.well { height: 29px; border: 1px dashed #c0bebc; margin-top: 5px; padding: 3px 2px 2px; background: #fafafa; }
.chip { height: 23px; border: 1px solid #c0bebc; border-radius: 2px; background: #edebe9; display: flex; align-items: center; justify-content: space-between; padding: 0 3px 0 4px; }
.drill { font-weight: 600; color: #484644; margin-top: 11px; font-size: 11.3px; }
.toggle-row { display: flex; align-items: center; justify-content: space-between; margin: 0 16px 0 8px; height: 16px; }
.toggle-row span { margin-top: -1px; }
.r1 { margin-top: 8px; } .r2 { margin-top: 11px; }
.toggle { width: 32px; height: 16px; border: 1px solid #605e5c; border-radius: 8px; background: #fff; font-size: 8.7px; line-height: 14px; display: flex; align-items: center; gap: 2px; padding-left: 4px; }
.toggle em { width: 8px; height: 8px; border-radius: 4px; background: #605e5c; }
.toggle.on { background: #117865; border-color: #117865; color: #fff; font-weight: 600; gap: 1px; }
.toggle.on em { background: #fff; }
.drill-well { margin-top: 10px; height: 26px; border: 1px dashed #c0bebc; background: #fff; text-align: center; line-height: 25px; font-size: 11.5px; }

.data { width: 181px; background: #f3f2f1; border-left: 1px solid #e1dfdd; color: #484644; }
.data .pane-head h2 { color: #252423; }
.d-search { margin: 6px 0 0 4px; width: 172px; height: 27px; border: 1px solid #605e5c; border-radius: 2px; display: flex; align-items: center; gap: 5px; padding-left: 7px; font-size: 12.6px; color: #605e5c; }
.tree { position: relative; padding-top: 3px; }
.d-scroll { position: absolute; right: 4px; top: 12px; width: 8px; height: 344px; background: #c8c6c4; }
.root { height: 24px; display: flex; align-items: center; padding-left: 7px; }
.root span { margin-left: -6px; font-size: 11.2px; }
.field { height: 24px; display: flex; align-items: center; padding-left: 24px; font-size: 11.35px; }
.cb { width: 12px; height: 12px; border: 1px solid #797775; border-radius: 2px; margin-left: 6px; }
.cb.on { background: #117865; border: 0; }
.ftype { margin: 0 6px 0 7px; width: 13px; }

.status { height: 25px; background: #f3f2f1; border-top: 1px solid #e1dfdd; border-bottom: 1px solid #000; display: flex; align-items: center; padding: 1px 17px 0 4px; flex: none; color: #484644; }
.zoom { margin-left: auto; }
.pct { margin: 0 18px 0 11px; width: 24px; }

.taskbar { height: 40px; background: linear-gradient(90deg, #d0e7ed, #cfe4ed 45%, #d6dbe8 85%, #d8dfe9); display: flex; color: #111; flex: none; }
.start { width: 48px; display: flex; align-items: center; justify-content: center; }
.tb-search { width: 288px; border: 2px solid #b5b3b1; background: #fff; display: flex; align-items: center; gap: 10px; padding-left: 10px; font-size: 14.1px; color: #252423; }
.tbi { width: 49px; display: flex; align-items: center; justify-content: center; border-bottom: 2px solid transparent; }
.taskview { margin-right: 1px; }
.open { border-image: linear-gradient(90deg, transparent 4px, #0078d7 4px, #0078d7 44px, transparent 44px) 2; border-bottom: 2px solid #0078d7; border-top: 0; }
.active { width: 48px; margin-left: 1px; background: #f0f6f9; border-image: none; }
.tray { margin-left: auto; display: flex; align-items: center; padding-right: 13px; }
.wx { margin-left: 7px; width: 140px; font-size: 13.5px; }
.icons { margin-left: 8px; }
.lang { margin-left: 18px; width: 30px; font-size: 11.2px; }
.clock { width: 70px; text-align: center; line-height: 18px; font-size: 11.1px; margin-left: 1px; }
.note { margin-left: 11px; }
</style>
